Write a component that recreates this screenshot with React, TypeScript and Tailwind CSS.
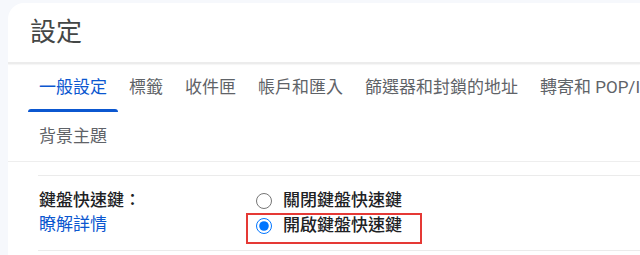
const tabs = ["一般設定", "標籤", "收件匣", "帳戶和匯入", "篩選器和封鎖的地址", "轉寄和 POP/IMAP"];

const font = { fontFamily: "Roboto, 'Noto Sans CJK TC', sans-serif" };

export default function App() {
  return (
    <div className="w-[640px] h-[255px] bg-[#f6f8fc] overflow-hidden pt-[3px] pl-[8px]" style={font}>
      <div className="bg-white rounded-tl-[16px] h-full">
        <div className="h-[59px] flex items-center pl-[22px] text-[26px] text-[#444746]">設定</div>
        <div className="h-[2px] bg-[#ececec] shadow-[0_1px_1px_rgba(0,0,0,0.04)]" />

        <div className="flex pl-[20px] whitespace-nowrap">
          {tabs.map((t, i) => (
            <div
              key={t}
              className={`relative h-[48px] px-[11px] flex items-center text-[17px] ${
                i === 0 ? "text-[#0b57d0]" : "text-[#5f6368]"
              }`}
            >
              {t}
              {i === 0 && (
                <span className="absolute left-0 right-0 bottom-0 h-[3px] bg-[#0b57d0] rounded-t-[3px]" />
              )}
            </div>
          ))}
        </div>
        <div className="h-[49px] flex items-center pl-[31px] text-[17px] text-[#5f6368]">背景主題</div>
        <div className="h-px bg-[#eeeeee]" />

        <div className="mt-[13px] ml-[30px] h-[76px] border-y border-[#ebebeb] flex">
          <div className="w-[208px] pl-[1px] pt-[12px] leading-[24px] text-[17px]">
            <div className="font-medium text-[#202124]">鍵盤快速鍵：</div>
            <div className="text-[#0b57d0]">瞭解詳情</div>
          </div>
          <div className="pt-[10px]">
            <label className="h-[27px] pt-[2px] px-[8px] border-2 border-transparent flex items-center gap-[11px] text-[17px] font-medium text-[#202124]">
              <input type="radio" name="ks" className="w-[16px] h-[16px] m-0" />
              關閉鍵盤快速鍵
            </label>
            <label className="h-[31px] pb-[5px] px-[8px] border-2 border-[#e53935] w-[176px] flex items-center gap-[11px] text-[17px] font-medium text-[#202124]">
              <input type="radio" name="ks" defaultChecked className="w-[16px] h-[16px] m-0" />
              開啟鍵盤快速鍵
            </label>
          </div>
        </div>
      </div>
    </div>
  );
}
